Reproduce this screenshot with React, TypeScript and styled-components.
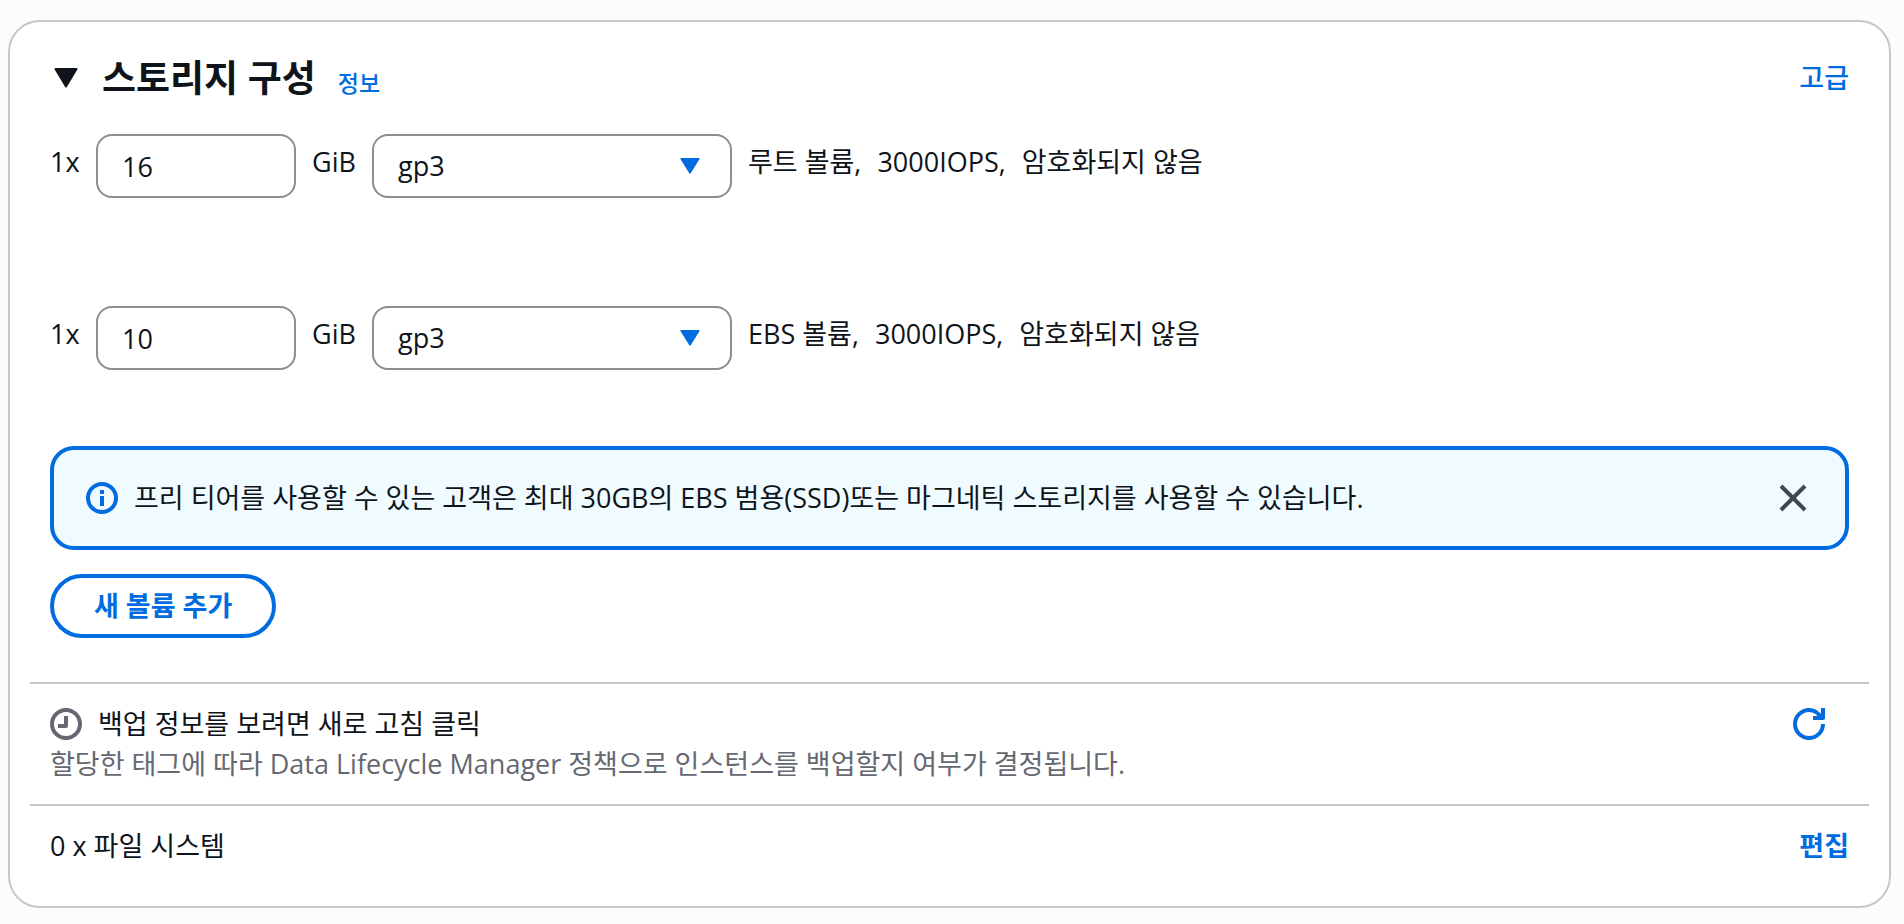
import { useState } from "react";
import styled, { createGlobalStyle } from "styled-components";

const color = {
  page: "#fcfcfc",
  surface: "#ffffff",
  border: "#c6c6cd",
  field: "#8c8c94",
  text: "#0f141a",
  muted: "#656871",
  close: "#424650",
  accent: "#006ce0",
  info: "#f0fbff",
};

const GlobalStyle = createGlobalStyle`
  *, *::before, *::after { box-sizing: border-box; }
  body {
    margin: 0;
    background: ${color.page};
    color: ${color.text};
    font-family: "Open Sans Medium", "Noto Sans Medium", "Open Sans", "Noto Sans CJK KR", sans-serif;
    font-size: 27px;
    font-weight: 400;
    line-height: 40px;
  }
  input, select, button { font: inherit; color: inherit; }
  svg { display: block; flex: none; }
`;

const Page = styled.main`
  padding: 20px 13px 16px 8px;
`;

const Card = styled.section`
  padding: 32px 20px 40px;
  background: ${color.surface};
  border: 2px solid ${color.border};
  border-radius: 32px;
`;

const Header = styled.header`
  display: flex;
  align-items: center;
  height: 48px;
  padding: 0 20px;
`;

const Toggle = styled.button`
  display: flex;
  padding: 0 4px;
  margin-right: 20px;
  background: none;
  border: 0;
  cursor: pointer;
`;

const TitleGroup = styled.div`
  display: flex;
  flex: 1;
  align-items: baseline;
  gap: 22px;
`;

const Title = styled.h2`
  margin: 0;
  font-size: 37px;
  font-weight: 700;
  line-height: 48px;
`;

const Link = styled.a<{ $size?: "small"; $bold?: boolean }>`
  color: ${color.accent};
  font-size: ${(p) => (p.$size === "small" ? "23px" : "27px")};
  font-weight: ${(p) => (p.$bold ? 700 : 500)};
  text-decoration: none;
`;

const Body = styled.div`
  padding: 32px 20px 44px;
`;

const Volumes = styled.div`
  display: flex;
  flex-direction: column;
  gap: 108px;
  margin-bottom: 76px;
`;

const VolumeRow = styled.div`
  display: flex;
  align-items: flex-start;
  gap: 16px;
  line-height: 56px;
`;

const FieldLabel = styled.label<{ $width: number }>`
  width: ${(p) => p.$width}px;
  white-space: nowrap;
`;

const SizeInput = styled.input`
  width: 200px;
  height: 64px;
  padding: 0 24px;
  background: ${color.surface};
  border: 2px solid ${color.field};
  border-radius: 16px;
`;

const SelectBox = styled.div`
  position: relative;
  width: 360px;
`;

const Select = styled.select`
  display: block;
  width: 100%;
  height: 64px;
  padding: 0 72px 0 24px;
  appearance: none;
  background: ${color.surface};
  border: 2px solid ${color.field};
  border-radius: 16px;
`;

const SelectCaret = styled.span`
  position: absolute;
  top: 24px;
  right: 32px;
  pointer-events: none;
`;

const Alert = styled.div`
  display: flex;
  align-items: center;
  gap: 16px;
  min-height: 104px;
  margin-bottom: 24px;
  padding: 0 32px;
  background: ${color.info};
  border: 4px solid ${color.accent};
  border-radius: 24px;
`;

const AlertText = styled.p`
  flex: 1;
  margin: 0;
`;

const IconButton = styled.button`
  display: flex;
  padding: 4px;
  background: none;
  border: 0;
  cursor: pointer;
`;

const AddButton = styled.button`
  height: 64px;
  padding: 0 40px;
  background: ${color.surface};
  border: 4px solid ${color.accent};
  border-radius: 32px;
  color: ${color.accent};
  font-weight: 700;
  cursor: pointer;
`;

const Section = styled.div`
  display: flex;
  align-items: flex-start;
  justify-content: space-between;
  padding: 20px 20px 0;
  border-top: 2px solid ${color.border};
`;

const BackupSection = styled(Section)`
  padding: 20px 40px 20px 20px;
`;

const Status = styled.div`
  display: flex;
  align-items: center;
  gap: 16px;
`;

const Hint = styled.p`
  margin: 0;
  color: ${color.muted};
`;

const Caret = ({ width, height, fill }: { width: number; height: number; fill: string }) => (
  <svg width={width} height={height} viewBox="0 0 24 20" preserveAspectRatio="none" aria-hidden="true">
    <path d="M1.5 1h21L12 18.5z" fill={fill} stroke={fill} strokeWidth="2" strokeLinejoin="round" />
  </svg>
);

const InfoIcon = () => (
  <svg width="32" height="32" viewBox="0 0 32 32" fill="none" aria-hidden="true">
    <circle cx="16" cy="16" r="14" stroke={color.accent} strokeWidth="4" />
    <path d="M16 8v4M16 14v10" stroke={color.accent} strokeWidth="4" />
  </svg>
);

const ClockIcon = () => (
  <svg width="32" height="32" viewBox="0 0 32 32" fill="none" aria-hidden="true">
    <circle cx="16" cy="16" r="14" stroke={color.muted} strokeWidth="4" />
    <path d="M16 8v10H8" stroke={color.muted} strokeWidth="4" strokeLinejoin="round" />
  </svg>
);

const CloseIcon = () => (
  <svg width="32" height="32" viewBox="0 0 32 32" fill="none" aria-hidden="true">
    <path d="M4 4l24 24M28 4L4 28" stroke={color.close} strokeWidth="4" />
  </svg>
);

const RefreshIcon = () => (
  <svg width="32" height="32" viewBox="0 0 32 32" fill="none" aria-hidden="true">
    <path d="M30 16A14 14 0 1 1 16 2c6 0 9.500 3 12.500 8" stroke={color.accent} strokeWidth="4" />
    <path d="M30 0v10H20" stroke={color.accent} strokeWidth="4" strokeLinejoin="round" />
  </svg>
);

type Volume = { id: string; size: string; details: string[] };

const volumes: Volume[] = [
  { id: "root", size: "16", details: ["루트 볼륨,", "3000IOPS,", "암호화되지 않음"] },
  { id: "ebs", size: "10", details: ["EBS 볼륨,", "3000IOPS,", "암호화되지 않음"] },
];

const VolumeFields = ({ volume }: { volume: Volume }) => (
  <VolumeRow>
    <FieldLabel $width={30} htmlFor={`${volume.id}-size`}>
      1x
    </FieldLabel>
    <SizeInput id={`${volume.id}-size`} defaultValue={volume.size} inputMode="numeric" />
    <FieldLabel $width={44} htmlFor={`${volume.id}-type`}>
      GiB
    </FieldLabel>
    <SelectBox>
      <Select id={`${volume.id}-type`} defaultValue="gp3">
        <option>gp3</option>
        <option>gp2</option>
        <option>io1</option>
        <option>io2</option>
      </Select>
      <SelectCaret>
        <Caret width={20} height={16} fill={color.accent} />
      </SelectCaret>
    </SelectBox>
    {volume.details.map((detail) => (
      <span key={detail}>{detail}</span>
    ))}
  </VolumeRow>
);

export default function App() {
  const [open, setOpen] = useState(true);
  const [showAlert, setShowAlert] = useState(true);

  return (
    <>
      <GlobalStyle />
      <Page>
        <Card>
          <Header>
            <Toggle type="button" aria-label="스토리지 구성" aria-expanded={open} onClick={() => setOpen(!open)}>
              <Caret width={24} height={20} fill={color.text} />
            </Toggle>
            <TitleGroup>
              <Title>스토리지 구성</Title>
              <Link href="#info" $size="small">
                정보
              </Link>
            </TitleGroup>
            <Link href="#advanced">고급</Link>
          </Header>
          {open && (
            <>
              <Body>
                <Volumes>
                  {volumes.map((volume) => (
                    <VolumeFields key={volume.id} volume={volume} />
                  ))}
                </Volumes>
                {showAlert && (
                  <Alert role="status">
                    <InfoIcon />
                    <AlertText>
                      프리 티어를 사용할 수 있는 고객은 최대 30GB의 EBS 범용(SSD)또는 마그네틱 스토리지를 사용할 수
                      있습니다.
                    </AlertText>
                    <IconButton type="button" aria-label="닫기" onClick={() => setShowAlert(false)}>
                      <CloseIcon />
                    </IconButton>
                  </Alert>
                )}
                <AddButton type="button">새 볼륨 추가</AddButton>
              </Body>
              <BackupSection>
                <div>
                  <Status>
                    <ClockIcon />
                    <span>백업 정보를 보려면 새로 고침 클릭</span>
                  </Status>
                  <Hint>할당한 태그에 따라 Data Lifecycle Manager 정책으로 인스턴스를 백업할지 여부가 결정됩니다.</Hint>
                </div>
                <IconButton type="button" aria-label="새로 고침">
                  <RefreshIcon />
                </IconButton>
              </BackupSection>
              <Section>
                <span>0 x 파일 시스템</span>
                <Link href="#edit" $bold>
                  편집
                </Link>
              </Section>
            </>
          )}
        </Card>
      </Page>
    </>
  );
}
